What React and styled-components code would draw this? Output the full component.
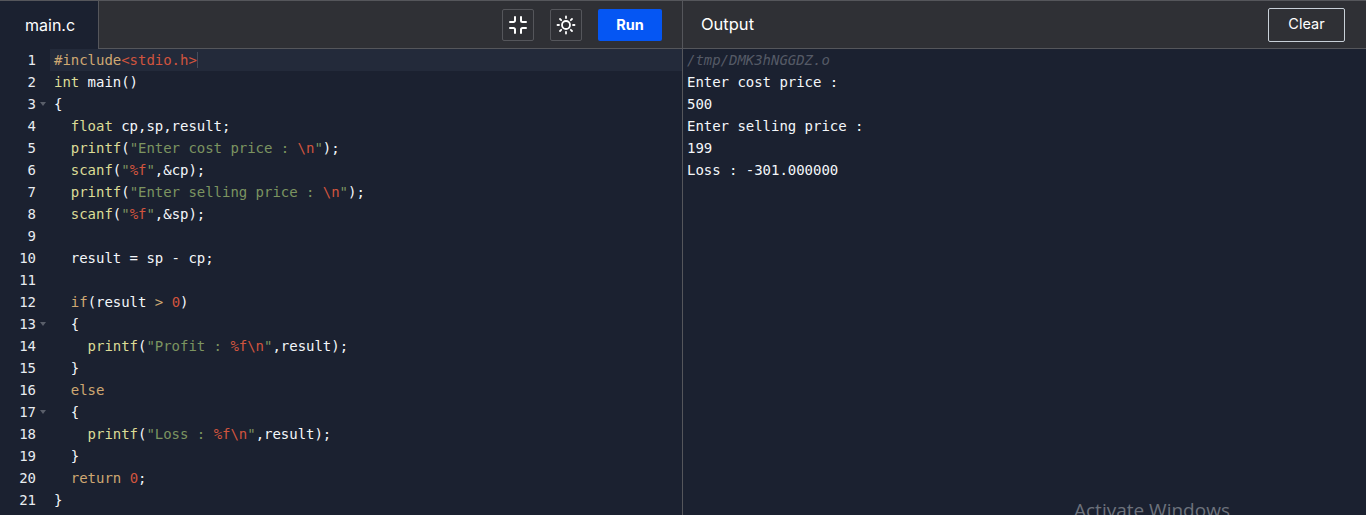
import { createGlobalStyle } from 'styled-components'
import styled from 'styled-components'

const colors = {
    pre: '#cfa872',
    fn: '#dcdc96',
    str: '#7c9460',
    red: '#d0543e',
    text: '#f4f7fa',
}

const T = ({ k, children }) => <Tok $c={colors[k]}>{children}</Tok>

const lines = [
    { code: <><T k="pre">#include</T><T k="red">&lt;stdio.h&gt;</T></>, active: true },
    { code: <><T k="fn">int</T> main()</> },
    { code: <>{'{'}</>, fold: true },
    { code: <>  <T k="fn">float</T> cp,sp,result;</> },
    { code: <>  <T k="fn">printf</T>(<T k="str">"Enter cost price : </T><T k="red">\n</T><T k="str">"</T>);</> },
    { code: <>  <T k="fn">scanf</T>(<T k="str">"</T><T k="red">%f</T><T k="str">"</T>,&amp;cp);</> },
    { code: <>  <T k="fn">printf</T>(<T k="str">"Enter selling price : </T><T k="red">\n</T><T k="str">"</T>);</> },
    { code: <>  <T k="fn">scanf</T>(<T k="str">"</T><T k="red">%f</T><T k="str">"</T>,&amp;sp);</> },
    { code: '' },
    { code: <>  result = sp - cp;</> },
    { code: '' },
    { code: <>  <T k="pre">if</T>(result <T k="pre">&gt;</T> <T k="red">0</T>)</> },
    { code: <>  {'{'}</>, fold: true },
    { code: <>    <T k="fn">printf</T>(<T k="str">"Profit : </T><T k="red">%f\n</T><T k="str">"</T>,result);</> },
    { code: <>  {'}'}</> },
    { code: <>  <T k="pre">else</T></> },
    { code: <>  {'{'}</>, fold: true },
    { code: <>    <T k="fn">printf</T>(<T k="str">"Loss : </T><T k="red">%f\n</T><T k="str">"</T>,result);</> },
    { code: <>  {'}'}</> },
    { code: <>  <T k="pre">return</T> <T k="red">0</T>;</> },
    { code: <>{'}'}</> },
]

const output = ['Enter cost price :', '500', 'Enter selling price :', '199', 'Loss : -301.000000']

export default function App() {
    return (
        <>
            <GlobalStyle />
            <Page>
                <Header>
                    <EditorBar>
                        <Tab>main.c</Tab>
                        <Tools>
                            <IconButton aria-label="Exit fullscreen">
                                <svg width="20" height="20" viewBox="0 0 20 20" fill="none" stroke="#fff" strokeWidth="2" strokeLinecap="round" strokeLinejoin="round">
                                    <path d="M7 2v3.500a1.500 1.500 0 0 1-1.500 1.500H2" />
                                    <path d="M13 2v3.500a1.500 1.500 0 0 0 1.500 1.500H18" />
                                    <path d="M7 18v-3.500A1.500 1.500 0 0 0 5.500 13H2" />
                                    <path d="M13 18v-3.500a1.500 1.500 0 0 1 1.500-1.500H18" />
                                </svg>
                            </IconButton>
                            <IconButton aria-label="Theme">
                                <svg width="20" height="20" viewBox="0 0 20 20" fill="none" stroke="#fff" strokeWidth="1.800" strokeLinecap="round">
                                    <circle cx="10" cy="10" r="4" />
                                    <path d="M10 1.500v1.500M10 17v1.500M1.500 10H3M17 10h1.500M4 4l1.200 1.200M14.800 14.800L16 16M4 16l1.200-1.200M14.800 5.200L16 4" />
                                </svg>
                            </IconButton>
                            <RunButton>Run</RunButton>
                        </Tools>
                    </EditorBar>
                    <OutputBar>
                        <OutputTitle>Output</OutputTitle>
                        <ClearButton>Clear</ClearButton>
                    </OutputBar>
                </Header>
                <Body>
                    <Editor>
                        {lines.map((line, i) => (
                            <Row key={i}>
                                <Gutter>
                                    <LineNo>{i + 1}</LineNo>
                                    <Fold>{line.fold && <FoldArrow />}</Fold>
                                </Gutter>
                                <Code $active={line.active}>
                                    <CodeText $active={line.active}>{line.code}</CodeText>
                                </Code>
                            </Row>
                        ))}
                    </Editor>
                    <Output>
                        <Path>/tmp/DMK3hNGGDZ.o</Path>
                        {output.map((text) => <OutLine key={text}>{text}</OutLine>)}
                    </Output>
                </Body>
                <Watermark>Activate Windows</Watermark>
            </Page>
        </>
    )
}

const GlobalStyle = createGlobalStyle`
    html, body {
        margin: 0;
        padding: 0;
        background: #1b2130;
    }
`

const Page = styled.div`
    position: relative;
    width: 1366px;
    height: 515px;
    overflow: hidden;
    background: #1b2130;
    font-family: 'Inter', 'Liberation Sans', sans-serif;
`

const Header = styled.div`
    display: grid;
    grid-template-columns: 682px 1fr;
    height: 49px;
    box-sizing: border-box;
    border-top: 1px solid #55565b;
    border-bottom: 1px solid #55565b;
    background: #2f3035;
`

const EditorBar = styled.div`
    display: flex;
    justify-content: space-between;
    align-items: center;
`

const Tab = styled.div`
    width: 99px;
    height: 48px;
    margin-bottom: -1px;
    box-sizing: border-box;
    padding: 0 0 1px 25px;
    display: flex;
    align-items: center;
    background: #1b2130;
    border-right: 1px solid #55565b;
    color: #fff;
    font-size: 16px;
`

const Tools = styled.div`
    display: flex;
    align-items: center;
    gap: 16px;
    padding: 1px 20px 0 0;
`

const IconButton = styled.button`
    width: 32px;
    height: 32px;
    padding: 0;
    display: flex;
    align-items: center;
    justify-content: center;
    background: transparent;
    border: 1px solid #55565b;
    border-radius: 2px;
`

const RunButton = styled.button`
    width: 64px;
    height: 32px;
    padding: 0 0 2px;
    background: #0556f3;
    border: none;
    border-radius: 2px;
    color: #fff;
    font-family: inherit;
    font-size: 14.500px;
    font-weight: 700;
`

const OutputBar = styled.div`
    display: flex;
    justify-content: space-between;
    align-items: center;
    padding: 0 21px 0 18px;
    border-left: 1px solid #55565b;
`

const OutputTitle = styled.div`
    color: #fff;
    font-size: 16.500px;
    padding-bottom: 1px;
`

const ClearButton = styled.button`
    width: 77px;
    height: 34px;
    padding: 0 0 2px;
    background: transparent;
    border: 1px solid #c8d0d8;
    border-radius: 2px;
    color: #fff;
    font-family: inherit;
    font-size: 14.500px;
`

const Body = styled.div`
    display: grid;
    grid-template-columns: 682px 1fr;
    height: 466px;
    font-family: 'DejaVu Sans Mono', monospace;
    font-size: 14px;
    line-height: 22px;
    letter-spacing: -0.03px;
`

const Editor = styled.div`
    color: ${colors.text};
`

const Row = styled.div`
    display: flex;
    height: 22px;
`

const Gutter = styled.div`
    width: 50px;
    flex: none;
    display: flex;
    justify-content: flex-end;
`

const LineNo = styled.span`
    color: #e8ecf0;
`

const Fold = styled.span`
    width: 14px;
    display: flex;
    align-items: center;
    justify-content: center;
`

const FoldArrow = styled.span`
    width: 0;
    height: 0;
    border-left: 3px solid transparent;
    border-right: 3px solid transparent;
    border-top: 4px solid #5a5f6a;
`

const Code = styled.div`
    flex: 1;
    padding-left: 4px;
    background: ${(p) => (p.$active ? '#232a3a' : 'transparent')};
`

const CodeText = styled.span`
    white-space: pre;
    ${(p) => p.$active && 'border-right: 1.500px solid #454b5a;'}
`

const Tok = styled.span`
    color: ${(p) => p.$c};
`

const Output = styled.div`
    border-left: 1px solid #55565b;
    padding-left: 4px;
    color: #f4f7fa;
`

const Path = styled.div`
    color: #555a66;
    font-style: italic;
`

const OutLine = styled.div`
    white-space: pre;
`

const Watermark = styled.div`
    position: absolute;
    left: 1074px;
    top: 497px;
    color: #6d727c;
    font-family: 'Open Sans', sans-serif;
    font-size: 19px;
    line-height: 26px;
`
